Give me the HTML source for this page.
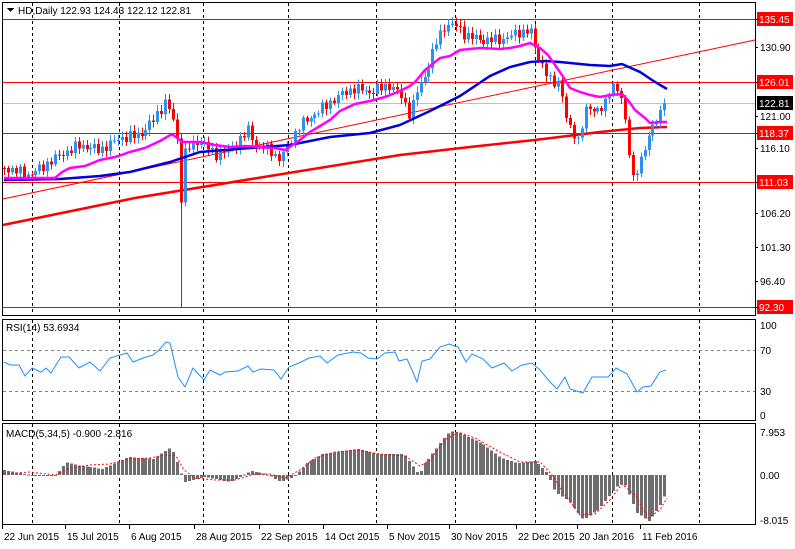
<!DOCTYPE html>
<html><head><meta charset="utf-8"><style>
html,body{margin:0;padding:0;background:#fff;}
body{width:795px;height:544px;overflow:hidden;font-family:"Liberation Sans",sans-serif;}
svg text{font-family:"Liberation Sans",sans-serif;font-size:10px;fill:#000;}
</style></head><body>
<svg id="s" width="795" height="544" viewBox="0 0 795 544" xmlns="http://www.w3.org/2000/svg" shape-rendering="crispEdges">
<rect width="795" height="544" fill="#fff"/>
<rect x="2.5" y="2.5" width="753" height="313" fill="none" stroke="#000"/>
<rect x="2.5" y="319.5" width="753" height="101" fill="none" stroke="#000"/>
<rect x="2.5" y="423.5" width="753" height="101" fill="none" stroke="#000"/>
<g id="grid" stroke="#000" stroke-dasharray="3,3"></g>
<line x1="3" y1="103.5" x2="755" y2="103.5" stroke="#c0c0c0"/>
<g stroke="#ff0000">
<line x1="3" y1="19.5" x2="755" y2="19.5"/>
<line x1="3" y1="82.5" x2="755" y2="82.5"/>
<line x1="3" y1="133.5" x2="755" y2="133.5"/>
<line x1="3" y1="182.5" x2="755" y2="182.5"/>
<line x1="3" y1="307.5" x2="755" y2="307.5"/>
</g>
<line x1="3" y1="199" x2="755" y2="40" stroke="#ff0000" shape-rendering="auto"/>
<polyline fill="none" stroke="#ff0000" stroke-width="2.5" shape-rendering="auto" points="3,225 135,198 270,176 400,155 470,147 535,140 600,132 640,128 667,127"/>
<g id="candles"></g>
<polyline fill="none" stroke="#0000dd" stroke-width="2.5" shape-rendering="auto" points="4,180 60,179 100,176 130,172 170,162 200,152 250,148 290,145 330,137 370,133 400,125 430,111 460,96 490,76 510,67 530,62 545,61 560,62 590,65 610,66 622,64 640,72 655,82 667,89"/>
<polyline fill="none" stroke="#ff00ff" stroke-width="2.5" shape-rendering="auto" points="4,178 55,178 62,172 70,168 85,166 100,160 115,157 130,152 145,148 160,141 172,134 182,142 200,142 215,145 230,147 245,146 260,147 275,148 285,150 300,140 310,132 320,126 330,120 340,111 355,104 370,101 385,97 400,91 410,86 415,82 425,70 440,58 450,56 460,50 480,48 500,49 510,48 520,46 530,43 540,48 548,55 555,65 562,75 570,88 580,92 590,95 600,97 610,95 622,94 628,100 635,110 645,118 650,123 660,122 667,122"/>
<path d="M7,8 L14,8 L10.5,12 Z" fill="#000"/>
<text x="18" y="14">HD,Daily  122.93 124.43 122.12 122.81</text>
<g id="axis"></g>
<g stroke="#808080" stroke-dasharray="3,3"><line x1="3" y1="350.5" x2="755" y2="350.5"/><line x1="3" y1="391.5" x2="755" y2="391.5"/></g>
<polyline fill="none" stroke="#1e90ff" shape-rendering="auto" points="4,362 10,365 19,365 25,376 32,368 41,372 46,368 51,373 61,357 69,357 79,368 90,362 100,371 110,358 120,355 127,353 133,362 146,357 153,355 159,350 166,342 170,343 178,377 185,387 193,368 204,380 210,370 220,375 225,372 238,371 248,366 253,372 261,369 274,370 281,379 289,367 299,363 309,358 320,356 327,363 338,355 353,352 361,353 368,358 377,359 385,353 395,352 399,361 407,359 412,370 417,382 422,361 430,359 440,347 449,344 458,347 466,362 472,354 483,359 492,368 504,363 512,371 522,365 532,363 540,370 550,382 557,389 565,377 570,389 583,393 592,377 608,377 616,368 627,374 637,392 643,387 651,386 660,372 666,370"/>
<text x="6" y="331">RSI(14) 53.6934</text>
<text x="760" y="329">100</text><text x="760" y="354">70</text><text x="760" y="395">30</text><text x="760" y="419">0</text>
<g id="hist"></g>
<polyline fill="none" stroke="#ff0000" stroke-dasharray="2,2" shape-rendering="auto" points="4,474 30,472 55,475 70,468 90,465 110,464 130,459 150,458 165,455 176,456 184,470 195,478 215,480 235,480 255,474 270,474 285,478 300,470 315,458 335,452 358,450 380,454 405,456 420,466 430,460 445,440 458,432 475,438 500,452 520,462 540,462 552,475 565,495 580,515 595,514 610,500 622,484 635,495 648,518 660,510 667,498"/>
<text x="6" y="437">MACD(5,34,5) -0.900 -2.816</text>
<text x="760" y="436">7.953</text><text x="760" y="479">0.00</text><text x="760" y="524">-8.015</text>
<g id="dates"></g>
</svg>
<script>
(function(){
var NS="http://www.w3.org/2000/svg";
function el(p,t,a){var e=document.createElementNS(NS,t);for(var k in a)e.setAttribute(k,a[k]);p.appendChild(e);return e;}
var grid=document.getElementById('grid');
[32,119,203,288,376,455,535,612,699].forEach(function(x){
 el(grid,'line',{x1:x+.5,y1:3,x2:x+.5,y2:315});el(grid,'line',{x1:x+.5,y1:320,x2:x+.5,y2:420});el(grid,'line',{x1:x+.5,y1:424,x2:x+.5,y2:524});});
var ax=document.getElementById('axis');
[["135.45",19,1],["130.90",47,0],["126.01",82,1],["121.00",116,0],["118.37",133,1],["116.10",148,0],["111.03",182,1],["106.20",213,0],["101.30",247,0],["96.40",281,0],["92.30",307,1]].forEach(function(a){
 if(a[2]){el(ax,'rect',{x:757,y:a[1]-7,width:36,height:14,fill:'#ff0000'});var t=el(ax,'text',{x:759,y:a[1]+4,style:'fill:#fff'});t.textContent=a[0];}
 else{var t=el(ax,'text',{x:760,y:a[1]+4});t.textContent=a[0];}
 el(ax,'line',{x1:755,y1:a[1]+.5,x2:758,y2:a[1]+.5,stroke:'#000'});});
el(ax,'rect',{x:757,y:96,width:36,height:14,fill:'#000'});
var tt=el(ax,'text',{x:759,y:107,style:'fill:#fff'});tt.textContent="122.81";
var dg=document.getElementById('dates');
[["22 Jun 2015",4],["15 Jul 2015",67],["6 Aug 2015",131],["28 Aug 2015",196],["22 Sep 2015",261],["14 Oct 2015",325],["5 Nov 2015",389],["30 Nov 2015",451],["22 Dec 2015",518],["20 Jan 2016",579],["11 Feb 2016",642]].forEach(function(d){
 var t=el(dg,'text',{x:d[1],y:540});t.textContent=d[0];el(dg,'line',{x1:d[1]-1.5,y1:525,x2:d[1]-1.5,y2:529,stroke:'#000'});});
function interp(pts,x){for(var i=1;i<pts.length;i++){if(x<=pts[i][0]){var a=pts[i-1],b=pts[i];return a[1]+(b[1]-a[1])*(x-a[0])/(b[0]-a[0]);}}return pts[pts.length-1][1];}
var cp=[[4,168],[30,175],[45,165],[60,155],[80,145],[100,150],[120,138],[140,135],[155,118],[165,102],[172,115],[178,145],[181,200],[185,150],[200,140],[215,155],[230,150],[248,130],[255,145],[270,150],[280,160],[290,140],[300,125],[320,110],[340,95],[355,88],[370,92],[390,85],[400,95],[410,115],[415,95],[425,75],[435,45],[445,25],[455,25],[465,35],[480,40],[500,40],[520,32],[530,30],[535,50],[545,70],[552,85],[560,80],[565,115],[570,130],[578,140],[585,110],[595,110],[605,105],[612,85],[620,90],[628,145],[632,180],[638,165],[645,150],[650,130],[655,120],[660,115],[667,103]];
var cg=document.getElementById('candles');
var prev=interp(cp,4);
for(var i=0;i<169;i++){
 var x=4+i*3.93;var c=interp(cp,x)+Math.sin(i*2.7)*4+Math.sin(i*1.3)*2;
 if(i==168)c=103;
 var o=prev;prev=c;var bt=Math.min(o,c),bb=Math.max(o,c);
 if(bb-bt<1)bb=bt+1;
 var hi=bt-2-Math.abs(Math.sin(i*3.1))*4,lo=bb+2+Math.abs(Math.cos(i*2.3))*4;
 if(i==45){lo=307;}
 var col=c<o?'#2e90f0':'#ff0000';var xi=Math.round(x);
 el(cg,'line',{x1:xi+.5,y1:hi,x2:xi+.5,y2:lo,stroke:col});
 el(cg,'rect',{x:xi-1,y:bt,width:3,height:bb-bt,fill:col});
}
var hp=[[4,470],[30,475],[55,476],[66,462],[77,465],[102,469],[128,457],[153,459],[171,447],[176,459],[184,482],[205,477],[230,482],[251,471],[266,474],[281,482],[294,477],[307,463],[322,454],[358,449],[378,454],[404,454],[414,468],[419,475],[425,463],[440,443],[450,431],[460,433],[481,443],[501,458],[517,463],[535,461],[547,473],[555,492],[568,500],[583,520],[598,510],[616,487],[624,483],[637,513],[649,521],[660,505],[667,490]];
var hg=document.getElementById('hist');
for(var i=0;i<169;i++){var x=Math.round(4+i*3.93);var v=interp(hp,x);
 var y1=Math.min(v,475),y2=Math.max(v,475);if(y2-y1<1)y2=y1+1;
 el(hg,'rect',{x:x-1,y:y1,width:3,height:y2-y1,fill:'#6e6e6e'});}
})();
</script>
</body></html>
